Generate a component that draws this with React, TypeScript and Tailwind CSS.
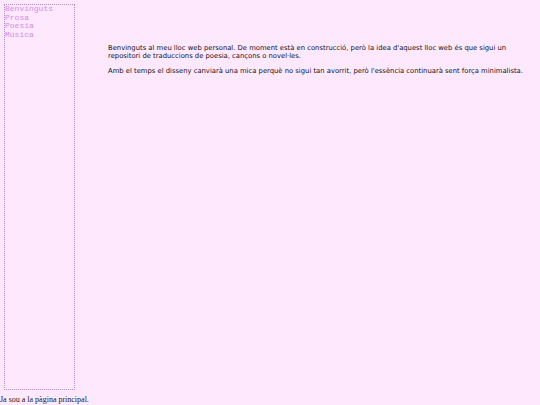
export default function App() {
  const links = ["Benvinguts", "Prosa", "Poesia", "Música"];

  return (
    <div className="min-h-screen bg-[#fde8fd] text-[8px]">
      <div className="flex items-start">
        <nav className="ml-1 mt-1 h-[386px] w-[71px] border border-dotted border-[#b28ad0] font-['Liberation_Mono',monospace] leading-[8.5px] text-[#d58ce6]">
          {links.map((l) => (
            <a key={l} href="#" className="block">
              {l}
            </a>
          ))}
        </nav>
        <main className="ml-[33px] mt-[44px] w-[420px] font-['DejaVu_Sans',Verdana,sans-serif] text-[6.8px] leading-[8px] text-[#111118]">
          <p className="mb-[7px]">
            Benvinguts al meu lloc web personal. De moment està en construcció, però la idea d'aquest lloc web és que
            sigui un repositori de traduccions de poesia, cançons o novel·les.
          </p>
          <p>
            Amb el temps el disseny canviarà una mica perquè no sigui tan avorrit, però l'essència continuarà sent força
            minimalista.
          </p>
        </main>
      </div>
      <p className="mt-[5px] font-['Liberation_Serif',serif] leading-[10px] text-[#222]">
        Ja sou a la pàgina principal.
      </p>
    </div>
  );
}
